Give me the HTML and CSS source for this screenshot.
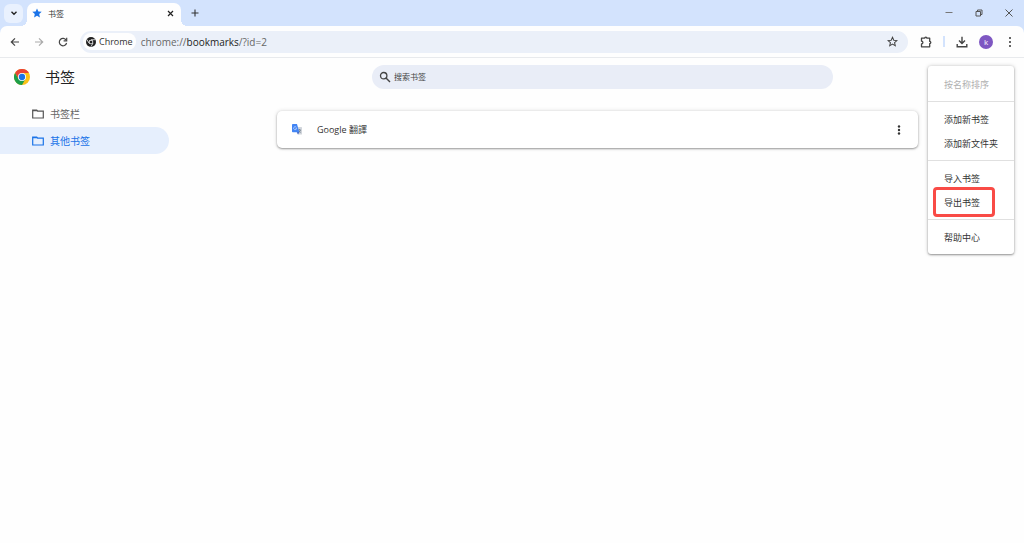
FILE: index.html
```html
<!DOCTYPE html>
<html lang="zh-CN">
<head>
    <meta charset="UTF-8">
    <meta name="viewport" content="width=device-width, initial-scale=1.0">
    <title>书签</title>
    <link rel="stylesheet" href="styles.css">
</head>
<body>
    <header class="browser">
        <!-- Tab strip -->
        <div class="tab-strip">
            <button class="tab-search" aria-label="搜索标签页">
                <svg width="8" height="8" viewBox="0 0 8 8"><path d="M1.5 2.7 4 5.2l2.5-2.5" fill="none" stroke="#222" stroke-width="1.4"/></svg>
            </button>
            <div class="tab">
                <svg width="10" height="10" viewBox="0 0 24 24"><path d="M12 1l3.3 7.4 8 .8-6 5.4 1.7 7.9-7-4.1-7 4.1 1.7-7.9-6-5.4 8-.8z" fill="#1a73e8"/></svg>
                <span class="tab-title">书签</span>
                <button class="icon-btn" aria-label="关闭">
                    <svg width="7" height="7" viewBox="0 0 7 7"><path d="M1 1l5 5M6 1 1 6" stroke="#222" stroke-width="1.2"/></svg>
                </button>
            </div>
            <button class="icon-btn new-tab" aria-label="新标签页">
                <svg width="8" height="8" viewBox="0 0 8 8"><path d="M4 .5v7M.5 4h7" stroke="#333" stroke-width="1.1"/></svg>
            </button>
            <div class="window-controls">
                <button class="icon-btn" aria-label="最小化">
                    <svg width="8" height="8" viewBox="0 0 8 8"><path d="M.5 3.5h7" stroke="#777" stroke-width="1"/></svg>
                </button>
                <button class="icon-btn" aria-label="还原">
                    <svg width="8" height="8" viewBox="0 0 8 8"><path d="M1 2.5h4.5V7H1zM2.5 2.5V1H7v4.5H5.5" fill="none" stroke="#555" stroke-width="1"/></svg>
                </button>
                <button class="icon-btn" aria-label="关闭窗口">
                    <svg width="8" height="8" viewBox="0 0 8 8"><path d="M.5.5l7 7M7.5.5l-7 7" stroke="#555" stroke-width="1"/></svg>
                </button>
            </div>
        </div>

        <!-- Toolbar -->
        <div class="toolbar">
            <div class="nav-buttons">
                <button class="icon-btn" aria-label="后退">
                    <svg width="10" height="10" viewBox="0 0 10 10"><path d="M9 5H1.5M5 1.3 1.3 5 5 8.7" fill="none" stroke="#444" stroke-width="1.2"/></svg>
                </button>
                <button class="icon-btn" aria-label="前进" disabled>
                    <svg width="10" height="10" viewBox="0 0 10 10"><path d="M1 5h7.5M5 1.3 8.7 5 5 8.7" fill="none" stroke="#aaa" stroke-width="1.2"/></svg>
                </button>
                <button class="icon-btn" aria-label="重新加载">
                    <svg width="10" height="10" viewBox="0 0 10 10"><path d="M8.2 3.2A3.7 3.7 0 1 0 8.6 6" fill="none" stroke="#444" stroke-width="1.2"/><path d="M8.7.8v3H5.6" fill="none" stroke="#444" stroke-width="1.2"/></svg>
                </button>
            </div>
            <div class="omnibox">
                <span class="chip">
                    <svg width="10" height="10" viewBox="0 0 24 24"><circle cx="12" cy="12" r="12" fill="#222"/><path d="M12 6.5h10M7.2 14.7l-5-8.6M16.8 14.7l-5 8.6" stroke="#fff" stroke-width="1.8"/><circle cx="12" cy="12" r="5.5" fill="#fff"/><circle cx="12" cy="12" r="3.6" fill="#222"/></svg>
                    Chrome
                </span>
                <span class="url">chrome://<b>bookmarks</b>/?id=2</span>
                <button class="icon-btn" aria-label="添加书签">
                    <svg width="11" height="11" viewBox="0 0 24 24"><path d="M12 2.8l2.8 6.4 7 .7-5.3 4.6 1.6 6.9-6.1-3.7-6.1 3.7 1.6-6.9L2.2 9.9l7-.7z" fill="none" stroke="#444" stroke-width="2.2"/></svg>
                </button>
            </div>
            <div class="actions">
                <button class="icon-btn" aria-label="扩展程序">
                    <svg width="12" height="12" viewBox="0 0 12 12"><path d="M1.5 2.2h3.2a1.1 1.1 0 0 1 2.2 0h2.8v3.2a1.1 1.1 0 0 1 0 2.2v3.2H1.5V8a1.4 1.4 0 0 0 0-2.8z" fill="none" stroke="#444" stroke-width="1.3" stroke-linejoin="round"/></svg>
                </button>
                <span class="divider"></span>
                <button class="icon-btn" aria-label="下载">
                    <svg width="12" height="12" viewBox="0 0 12 12"><path d="M6 .8v6.4M3 4.5l3 3 3-3M1.2 8v2.8h9.6V8" fill="none" stroke="#444" stroke-width="1.4"/></svg>
                </button>
                <button class="avatar">k</button>
                <button class="icon-btn" aria-label="自定义及控制">
                    <svg width="4" height="12" viewBox="0 0 4 12"><g fill="#333"><circle cx="2" cy="2" r="1"/><circle cx="2" cy="6" r="1"/><circle cx="2" cy="10" r="1"/></g></svg>
                </button>
            </div>
        </div>
    </header>

    <!-- Bookmark manager -->
    <div class="page-header">
        <svg width="16" height="16" viewBox="0 0 48 48">
            <circle cx="24" cy="24" r="24" fill="#fbc116"/>
            <path d="M3.2 12A24 24 0 0 1 44.8 12H24L14 30z" fill="#ea4335"/>
            <path d="M3.2 12A24 24 0 0 0 24 48L34.4 30H13.6z" fill="#1e9e4a"/>
            <circle cx="24" cy="24" r="12" fill="#fff"/>
            <circle cx="24" cy="24" r="9.5" fill="#1a73e8"/>
        </svg>
        <h1>书签</h1>
        <label class="search">
            <svg width="12" height="12" viewBox="0 0 12 12"><circle cx="4.7" cy="4.7" r="3.2" fill="none" stroke="#444" stroke-width="1.3"/><path d="M7 7l4 4" stroke="#444" stroke-width="1.5"/></svg>
            <input type="text" placeholder="搜索书签" aria-label="搜索书签">
        </label>
    </div>

    <div class="content">
        <nav class="sidebar">
            <a class="folder" href="#">
                <svg width="12" height="10" viewBox="0 0 12 10"><path d="M.7 1h4l1 1.2h5.6V9H.7z" fill="none" stroke="#555" stroke-width="1.2"/><path d="M.7 1h4l1 1.2h-5z" fill="#555"/></svg>
                书签栏
            </a>
            <a class="folder selected" href="#">
                <svg width="12" height="10" viewBox="0 0 12 10"><path d="M.7 1h4l1 1.2h5.6V9H.7z" fill="none" stroke="#1a73e8" stroke-width="1.2"/><path d="M.7 1h4l1 1.2h-5z" fill="#1a73e8"/></svg>
                其他书签
            </a>
        </nav>
        <main class="list">
            <div class="bookmark">
                <svg width="10" height="11" viewBox="0 0 20 22"><path d="M8 6h11q1 0 1 1v13q0 1-1 1h-7z" fill="#d2d6dc"/><path d="M12 12h6M15 10v2M17 12q-1 4-4 5M13.5 13q1 3 4 4" stroke="#607080" stroke-width="1.2" fill="none"/><path d="M1.5 0H10l4.5 16.5h-13Q0 16.5 0 15V1.5Q0 0 1.5 0z" fill="#4285f4"/><path d="M9.500 16.5h5L12 21z" fill="#2a56c6"/><path d="M8.7 6.5A3 3 0 1 0 9.3 8.5H6.8" fill="none" stroke="#dbe7fd" stroke-width="1.2"/></svg>
                <a href="#">Google 翻譯</a>
                <button class="icon-btn" aria-label="更多操作">
                    <svg width="4" height="12" viewBox="0 0 4 12"><g fill="#333"><circle cx="2" cy="2.5" r="1.2"/><circle cx="2" cy="6" r="1.2"/><circle cx="2" cy="9.5" r="1.2"/></g></svg>
                </button>
            </div>
        </main>
    </div>

    <div class="menu">
        <button disabled>按名称排序</button>
        <hr>
        <button>添加新书签</button>
        <button>添加新文件夹</button>
        <hr>
        <button>导入书签</button>
        <button class="marked">导出书签</button>
        <hr>
        <button>帮助中心</button>
    </div>
</body>
</html>
```
FILE: styles.css
```css
* {
    margin: 0;
    padding: 0;
    box-sizing: border-box;
}

body {
    font-family: "Open Sans", "Noto Sans CJK SC", sans-serif;
    font-size: 9px;
    color: #333;
    background: #fefefe;
    min-height: 100vh;
    position: relative;
}

button {
    font: inherit;
    color: inherit;
    background: none;
    border: none;
    cursor: pointer;
}

svg {
    display: block;
    flex: none;
}

a {
    color: inherit;
    text-decoration: none;
}

.icon-btn {
    display: flex;
    align-items: center;
    justify-content: center;
}

.browser {
    background: #d3e3fd;
}

/* Tab strip */
.tab-strip {
    display: flex;
    align-items: center;
    height: 26px;
    padding: 0 11px 0 4px;
}

.tab-search {
    display: flex;
    align-items: center;
    justify-content: center;
    width: 19px;
    height: 19px;
    border-radius: 6px;
    background: #e9f1fe;
}

.tab {
    position: relative;
    display: flex;
    align-items: center;
    align-self: flex-end;
    gap: 6px;
    width: 154px;
    height: 23px;
    margin-left: 4px;
    padding: 0 7px 3px 5px;
    border-radius: 7px 7px 0 0;
    background: #fefefe;
}

.tab::before,
.tab::after {
    content: "";
    position: absolute;
    bottom: 0;
    width: 6px;
    height: 6px;
}

.tab::before {
    right: 100%;
    background: radial-gradient(circle at 0 0, transparent 6px, #fefefe 6px);
}

.tab::after {
    left: 100%;
    background: radial-gradient(circle at 100% 0, transparent 6px, #fefefe 6px);
}

.tab-title {
    flex: 1;
    font-size: 8px;
}

.new-tab {
    margin-left: 10px;
}

.window-controls {
    display: flex;
    gap: 22px;
    margin-left: auto;
}

/* Toolbar */
.toolbar {
    display: flex;
    align-items: center;
    height: 32px;
    padding: 0 12px 0 10px;
    border-bottom: 1px solid #e8eaed;
    border-radius: 7px 7px 0 0;
    background: #fefefe;
}

.nav-buttons {
    display: flex;
    gap: 14px;
}

.omnibox {
    display: flex;
    align-items: center;
    flex: 1;
    height: 22px;
    margin-left: 12px;
    padding: 0 10px 0 3px;
    border-radius: 11px;
    background: #ebf0f9;
}

.chip {
    display: flex;
    align-items: center;
    gap: 3px;
    height: 17px;
    padding: 0 3px;
    border-radius: 8px;
    background: #fefefe;
}

.url {
    flex: 1;
    margin-left: 5px;
    font-size: 10px;
    color: #666;
}

.url b {
    font-weight: 400;
    color: #222;
}

.actions {
    display: flex;
    align-items: center;
    gap: 11px;
    margin-left: 12px;
}

.divider {
    width: 2px;
    height: 11px;
    background: #d3e3fd;
}

.avatar {
    width: 14px;
    height: 14px;
    border-radius: 50%;
    font-size: 8px;
    line-height: 12px;
    color: #fff;
    background: #7e57c2;
}

.actions > :last-child {
    margin-left: 4px;
}

/* Bookmark manager */
.page-header {
    display: flex;
    align-items: center;
    height: 37px;
    padding: 0 191px 0 14px;
}

h1 {
    width: 327px;
    margin-left: 15px;
    font-size: 15px;
    line-height: 18px;
    font-weight: 400;
    color: #222;
}

.search {
    display: flex;
    align-items: center;
    flex: 1;
    gap: 3px;
    height: 24px;
    padding: 0 7px;
    border-radius: 12px;
    background: #e9edf7;
}

.search input {
    flex: 1;
    min-width: 0;
    border: none;
    outline: none;
    font: inherit;
    font-size: 8px;
    background: none;
}

.search input::placeholder {
    color: #444;
}

.content {
    display: flex;
    padding: 5px 106px 0 0;
}

.sidebar {
    width: 169px;
    margin-right: 108px;
}

.folder {
    display: flex;
    align-items: center;
    gap: 6px;
    height: 27px;
    padding-left: 32px;
    border-radius: 0 14px 14px 0;
    font-size: 10px;
    line-height: 12px;
    color: #666;
}

.folder.selected {
    color: #1a73e8;
    background: #e6effd;
}

.list {
    flex: 1;
    padding-top: 11px;
}

.bookmark {
    display: flex;
    align-items: center;
    height: 37px;
    padding: 0 17px 0 15px;
    border-radius: 5px;
    background: #fff;
    box-shadow: 0 1px 2px rgba(0,0,0,0.35), 0 0 4px rgba(0,0,0,0.15);
}

.bookmark a {
    flex: 1;
    margin-left: 15px;
}

/* Dropdown menu */
.menu {
    position: absolute;
    top: 66px;
    right: 10px;
    width: 86px;
    padding: 6px 0 5px;
    border-radius: 3px;
    background: #fff;
    box-shadow: 0 1px 2px rgba(0,0,0,0.35), 0 0 4px rgba(0,0,0,0.2);
}

.menu button {
    position: relative;
    display: block;
    width: 100%;
    height: 24px;
    padding-left: 16px;
    text-align: left;
}

.menu button:disabled {
    color: #b0b0b0;
}

.menu hr {
    margin: 5px 0;
    border: none;
    border-top: 1px solid #e0e0e0;
}

.menu .marked::after {
    content: "";
    position: absolute;
    top: -3px;
    bottom: -3px;
    left: 5px;
    right: 19px;
    border: 3px solid #f94b46;
    border-radius: 4px;
}
```
